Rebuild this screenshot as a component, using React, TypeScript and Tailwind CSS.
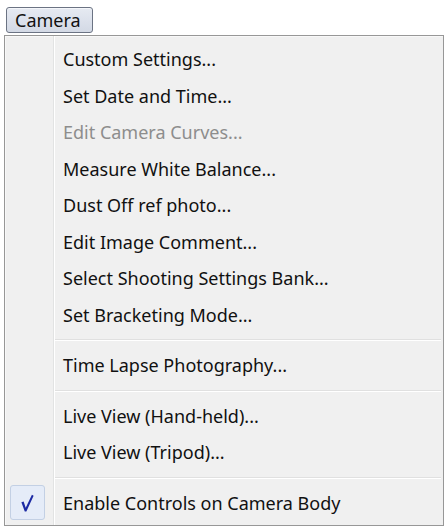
import React from 'react';

type Item =
  | { kind: 'item'; label: string; disabled?: boolean; checked?: boolean }
  | { kind: 'sep' };

const ITEMS: Item[] = [
  { kind: 'item', label: 'Custom Settings...' },
  { kind: 'item', label: 'Set Date and Time...' },
  { kind: 'item', label: 'Edit Camera Curves...', disabled: true },
  { kind: 'item', label: 'Measure White Balance...' },
  { kind: 'item', label: 'Dust Off ref photo...' },
  { kind: 'item', label: 'Edit Image Comment...' },
  { kind: 'item', label: 'Select Shooting Settings Bank...' },
  { kind: 'item', label: 'Set Bracketing Mode...' },
  { kind: 'sep' },
  { kind: 'item', label: 'Time Lapse Photography...' },
  { kind: 'sep' },
  { kind: 'item', label: 'Live View (Hand-held)...' },
  { kind: 'item', label: 'Live View (Tripod)...' },
  { kind: 'sep' },
  { kind: 'item', label: 'Enable Controls on Camera Body', checked: true },
];

function CheckMark() {
  // tick glyph inside the highlighted gutter box
  return (
    <svg width="35" height="35" viewBox="0 0 35 35" className="block">
      <path
        d="M11 17.2 L13.4 16.4 L15.6 23.2 L22.2 9.4 L24 10.4 L16.3 27 L14.6 27 Z"
        fill="#1c2aa3"
      />
    </svg>
  );
}

export default function App() {
  return (
    <div
      className="w-[445px] h-[531px] bg-white overflow-hidden"
      style={{ fontFamily: '"Segoe UI", "Noto Sans", "Open Sans", sans-serif' }}
    >
      {/* menu bar button */}
      <div className="pt-[7px] pl-[6px]">
        <div className="w-[87px] h-[26px] rounded-[3px] border border-[#6b7383] bg-[linear-gradient(to_bottom,#e6eaf2,#d3d9e5)] flex items-center pl-[8px] text-[18px] leading-none text-[#111] shadow-[inset_0_1px_0_#f4f6fa]">
          Camera
        </div>
      </div>

      {/* dropdown */}
      <div className="mt-[2px] ml-[4px] w-[440px] border border-[#979797] bg-[#f0f0f0] shadow-[inset_1px_1px_0_#f8f8f8]">
        <div className="pt-[5px] pb-[4px] bg-[linear-gradient(to_right,transparent_48px,#e2e3e3_48px,#e2e3e3_49px,#ffffff_49px,#ffffff_50px,transparent_50px)]">
          {ITEMS.map((it, i) =>
            it.kind === 'sep' ? (
              <div key={i} className="h-[14px] flex flex-col justify-center pl-[50px] pr-[2px]">
                <div className="h-px bg-[#e0e0e0]" />
                <div className="h-px bg-white" />
              </div>
            ) : (
              <div key={i} className="h-[36.5px] flex items-center">
                <div className="w-[50px] shrink-0 flex items-center">
                  {it.checked && (
                    <div className="ml-[5px] w-[35px] h-[35px] rounded-[3px] border border-[#c3d0e4] bg-[#e5ecf8] flex items-center justify-center">
                      <CheckMark />
                    </div>
                  )}
                </div>
                <span
                  className={`pl-[8px] text-[18px] leading-none whitespace-nowrap ${
                    it.disabled ? 'text-[#8d8d8d]' : 'text-[#111]'
                  }`}
                >
                  {it.label}
                </span>
              </div>
            )
          )}
        </div>
      </div>
    </div>
  );
}
